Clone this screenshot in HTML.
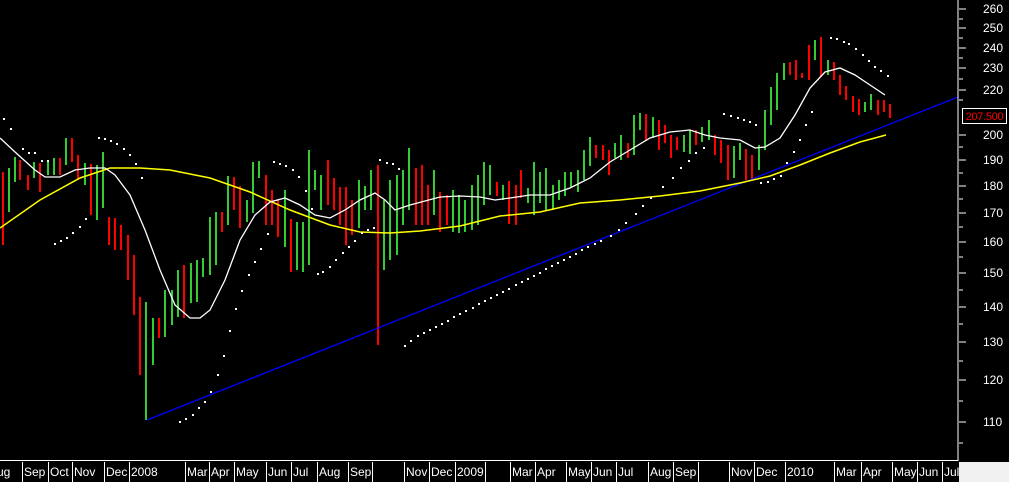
<!DOCTYPE html>
<html><head><meta charset="utf-8"><style>
html,body{margin:0;padding:0;background:#000;}
body{width:1009px;height:482px;position:relative;overflow:hidden;font-family:"Liberation Sans",Arial,sans-serif;}
svg{position:absolute;left:0;top:0;}
.yl{position:absolute;left:983px;color:#fff;font-size:12px;line-height:12px;}
.xl{position:absolute;top:462px;height:20px;border-left:1px solid #fff;color:#fff;font-size:12px;line-height:20px;padding-left:1px;white-space:nowrap;}
</style></head><body>
<svg width="1009" height="482">
<g stroke-width="2" fill="none">
<path stroke="#ff0000" d="M3 172V245M20 160V180M28 175V190M40 163V192M60 158V175M72 138V162M78 155V180M91 164V215M109 217V245M115 218V250M121 225V250M128 235V280M134 255V315M140 297V375M159 318V338M184 265V318M222 212V232M234 177V210M240 186V228M266 175V225M272 190V225M278 200V237M291 219V272M328 160V205M334 178V210M340 187V225M346 187V245M352 200V235M378 165V345M416 168V225M422 165V225M428 185V225M440 192V232M447 195V225M497 182V196M509 181V224M516 185V225M521 170V198M596 145V158M603 145V160M609 150V175M628 143V158M646 114V141M659 120V150M665 125V143M671 135V158M677 137V150M696 130V145M715 135V155M721 140V163M728 145V180M746 149V180M752 155V180M790 62V75M796 60V80M802 73V78M809 45V80M821 37V77M834 62V80M840 75V95M846 86V100M853 96V112M859 99V115M878 100V115M884 100V112M890 104V118"/>
<path stroke="#33cc33" d="M9 168V212M15 157V182M34 162V178M48 160V175M54 158V175M66 138V165M85 163V185M97 165V220M103 152V208M146 302V420M153 318V365M165 290V337M172 290V325M178 270V317M191 263V303M197 260V302M203 258V277M210 217V275M216 212V265M228 176V225M247 200V222M253 162V213M259 161V178M285 190V247M297 222V270M303 222V272M309 150V265M315 170V190M321 175V210M359 180V228M365 186V210M371 170V210M384 200V270M390 180V260M397 175V255M403 170V225M409 148V210M434 170V215M453 190V232M459 195V233M465 200V232M472 185V230M478 175V225M484 162V205M490 165V195M503 185V200M528 188V203M534 162V215M540 172V203M546 168V210M553 185V210M559 180V200M565 172V196M571 172V187M578 170V192M584 150V180M590 137V166M615 143V158M621 135V160M634 115V155M640 113V130M653 117V138M684 135V152M690 130V154M702 127V142M709 120V140M734 146V178M740 143V160M759 145V170M765 110V150M771 87V125M777 73V110M784 63V80M815 40V60M828 60V75M865 102V112M871 94V110"/>
<path stroke="#0000ff" stroke-width="1.3" d="M147 420L958 97"/>
<path stroke="#ffff00" stroke-width="1.5" d="M0 228L40 200L80 178L110 168L140 168L170 170L210 178L250 192L290 210L330 225L360 232L390 233L420 231L460 226L500 216L540 212L580 203L620 200L660 196L700 191L740 183L770 176L800 165L830 153L860 142L886 135"/>
<path stroke="#ffffff" stroke-width="1.3" d="M0 138L15 152L35 170L45 177L60 177L75 170L90 168L105 168L115 175L130 195L145 230L160 270L175 305L190 318L200 318L210 310L225 280L240 240L255 215L270 202L285 198L300 205L315 215L330 218L345 210L360 200L375 193L385 200L395 210L410 205L425 201L440 197L460 196L480 197L495 200L510 198L530 195L550 195L570 188L590 178L610 162L630 150L650 138L670 132L690 130L705 135L720 138L740 140L755 148L765 147L780 138L795 115L810 88L825 72L840 68L855 75L870 85L885 95"/>
<path stroke="#fff" stroke-width="1" d="M958 0V461M0 460.5H958"/>
<path stroke="#fff" stroke-width="1" d="M959 9H966M959 28H966M959 48H966M959 68H966M959 90H966M959 135H966M959 160H966M959 186H966M959 213H966M959 242H966M959 273H966M959 307H966M959 342H966M959 380H966M959 422H966M959 19H963M959 38H963M959 58H963M959 79H963M959 100H963M959 147H963M959 173H963M959 199H963M959 227H963M959 257H963M959 290H963M959 324H963M959 361H963M959 401H963M959 443H963"/>
</g>
<g fill="#fff">
<path d="M3 118h2v2h-2zM10 128h2v2h-2zM22 148h2v2h-2zM28 152h2v2h-2zM34 152h2v2h-2zM41 160h2v2h-2zM47 160h2v2h-2zM54 243h2v2h-2zM60 240h2v2h-2zM66 237h2v2h-2zM72 232h2v2h-2zM79 226h2v2h-2zM85 218h2v2h-2zM98 137h2v2h-2zM104 138h2v2h-2zM110 140h2v2h-2zM116 143h2v2h-2zM123 148h2v2h-2zM129 154h2v2h-2zM135 163h2v2h-2zM141 177h2v2h-2zM179 421h2v2h-2zM185 418h2v2h-2zM192 414h2v2h-2zM198 407h2v2h-2zM204 401h2v2h-2zM210 391h2v2h-2zM217 374h2v2h-2zM223 355h2v2h-2zM229 330h2v2h-2zM235 308h2v2h-2zM241 290h2v2h-2zM248 274h2v2h-2zM254 261h2v2h-2zM260 248h2v2h-2zM267 233h2v2h-2zM273 161h2v2h-2zM279 163h2v2h-2zM285 165h2v2h-2zM292 169h2v2h-2zM298 176h2v2h-2zM305 190h2v2h-2zM311 208h2v2h-2zM317 273h2v2h-2zM322 271h2v2h-2zM329 266h2v2h-2zM335 259h2v2h-2zM342 252h2v2h-2zM348 246h2v2h-2zM354 240h2v2h-2zM361 232h2v2h-2zM367 229h2v2h-2zM373 227h2v2h-2zM379 159h2v2h-2zM386 162h2v2h-2zM392 163h2v2h-2zM398 168h2v2h-2zM404 345h2v2h-2zM410 340h2v2h-2zM417 335h2v2h-2zM423 332h2v2h-2zM429 329h2v2h-2zM435 326h2v2h-2zM441 323h2v2h-2zM447 320h2v2h-2zM453 316h2v2h-2zM459 313h2v2h-2zM465 310h2v2h-2zM472 307h2v2h-2zM478 303h2v2h-2zM484 300h2v2h-2zM490 297h2v2h-2zM496 294h2v2h-2zM502 291h2v2h-2zM508 288h2v2h-2zM515 284h2v2h-2zM521 281h2v2h-2zM527 278h2v2h-2zM533 275h2v2h-2zM539 272h2v2h-2zM545 268h2v2h-2zM551 265h2v2h-2zM557 262h2v2h-2zM563 259h2v2h-2zM569 256h2v2h-2zM575 253h2v2h-2zM581 249h2v2h-2zM587 246h2v2h-2zM594 243h2v2h-2zM600 240h2v2h-2zM610 235h2v2h-2zM618 229h2v2h-2zM625 222h2v2h-2zM635 213h2v2h-2zM642 205h2v2h-2zM650 197h2v2h-2zM662 186h2v2h-2zM672 177h2v2h-2zM680 167h2v2h-2zM688 160h2v2h-2zM695 152h2v2h-2zM703 147h2v2h-2zM723 113h2v2h-2zM730 115h2v2h-2zM737 117h2v2h-2zM743 119h2v2h-2zM749 121h2v2h-2zM755 124h2v2h-2zM760 182h2v2h-2zM767 181h2v2h-2zM773 178h2v2h-2zM780 175h2v2h-2zM786 162h2v2h-2zM793 151h2v2h-2zM799 139h2v2h-2zM805 124h2v2h-2zM811 111h2v2h-2zM830 37h2v2h-2zM836 38h2v2h-2zM843 41h2v2h-2zM848 43h2v2h-2zM855 48h2v2h-2zM862 54h2v2h-2zM868 60h2v2h-2zM874 66h2v2h-2zM880 70h2v2h-2zM887 75h2v2h-2z"/>
</g>
<rect x="962.5" y="108.5" width="44" height="15" fill="#000" stroke="#fff" stroke-width="1"/>
<text x="984.5" y="120" fill="#ff0000" font-size="11" letter-spacing="-0.3" text-anchor="middle" font-family="Liberation Sans, Arial, sans-serif">207.500</text>
</svg>
<div class="yl" style="top:3px">260</div><div class="yl" style="top:22px">250</div><div class="yl" style="top:42px">240</div><div class="yl" style="top:62px">230</div><div class="yl" style="top:84px">220</div><div class="yl" style="top:129px">200</div><div class="yl" style="top:154px">190</div><div class="yl" style="top:180px">180</div><div class="yl" style="top:207px">170</div><div class="yl" style="top:236px">160</div><div class="yl" style="top:267px">150</div><div class="yl" style="top:301px">140</div><div class="yl" style="top:336px">130</div><div class="yl" style="top:374px">120</div><div class="yl" style="top:416px">110</div>
<div class="xl" style="left:-4px;border:none">ug</div>
<div class="xl" style="left:22px">Sep</div><div class="xl" style="left:48px">Oct</div><div class="xl" style="left:72px">Nov</div><div class="xl" style="left:104px">Dec</div><div class="xl" style="left:129px">2008</div><div class="xl" style="left:185px">Mar</div><div class="xl" style="left:209px">Apr</div><div class="xl" style="left:234px">May</div><div class="xl" style="left:266px">Jun</div><div class="xl" style="left:291px">Jul</div><div class="xl" style="left:317px">Aug</div><div class="xl" style="left:348px">Sep</div><div class="xl" style="left:372px"></div><div class="xl" style="left:404px">Nov</div><div class="xl" style="left:429px">Dec</div><div class="xl" style="left:455px">2009</div><div class="xl" style="left:485px"></div><div class="xl" style="left:510px">Mar</div><div class="xl" style="left:535px">Apr</div><div class="xl" style="left:566px">May</div><div class="xl" style="left:591px">Jun</div><div class="xl" style="left:616px">Jul</div><div class="xl" style="left:648px">Aug</div><div class="xl" style="left:673px">Sep</div><div class="xl" style="left:698px"></div><div class="xl" style="left:729px">Nov</div><div class="xl" style="left:754px">Dec</div><div class="xl" style="left:785px">2010</div><div class="xl" style="left:834px">Mar</div><div class="xl" style="left:861px">Apr</div><div class="xl" style="left:892px">May</div><div class="xl" style="left:917px">Jun</div><div class="xl" style="left:942px">Jul</div>
<div style="position:absolute;left:959px;top:462px;width:50px;height:20px;background:#f0f0f0;"></div>
</body></html>
